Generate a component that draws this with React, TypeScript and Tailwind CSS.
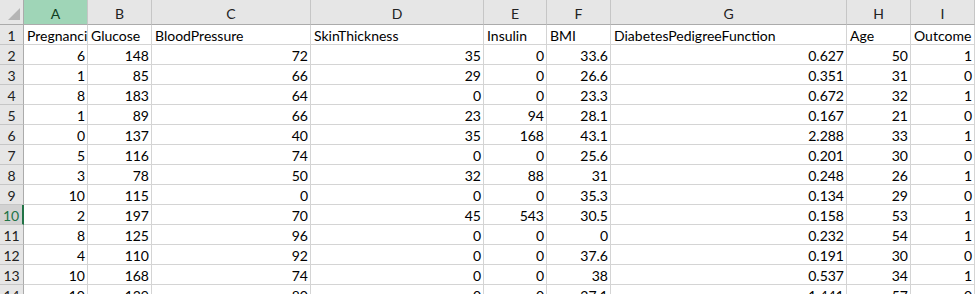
import React from 'react';

const columns = ['A', 'B', 'C', 'D', 'E', 'F', 'G', 'H', 'I'];

const headers = [
  'Pregnancies',
  'Glucose',
  'BloodPressure',
  'SkinThickness',
  'Insulin',
  'BMI',
  'DiabetesPedigreeFunction',
  'Age',
  'Outcome',
];

const rows: string[][] = [
  ['6', '148', '72', '35', '0', '33.6', '0.627', '50', '1'],
  ['1', '85', '66', '29', '0', '26.6', '0.351', '31', '0'],
  ['8', '183', '64', '0', '0', '23.3', '0.672', '32', '1'],
  ['1', '89', '66', '23', '94', '28.1', '0.167', '21', '0'],
  ['0', '137', '40', '35', '168', '43.1', '2.288', '33', '1'],
  ['5', '116', '74', '0', '0', '25.6', '0.201', '30', '0'],
  ['3', '78', '50', '32', '88', '31', '0.248', '26', '1'],
  ['10', '115', '0', '0', '0', '35.3', '0.134', '29', '0'],
  ['2', '197', '70', '45', '543', '30.5', '0.158', '53', '1'],
  ['8', '125', '96', '0', '0', '0', '0.232', '54', '1'],
  ['4', '110', '92', '0', '0', '37.6', '0.191', '30', '0'],
  ['10', '168', '74', '0', '0', '38', '0.537', '34', '1'],
  ['10', '139', '80', '0', '0', '27.1', '1.441', '57', '0'],
];

// row header + A..I, last column runs off the window edge
const gridCols = 'grid grid-cols-[24px_64px_64px_159px_173px_63px_64px_236px_64px_64px]';

const RowHeader = ({ n }: { n: number }) => {
  const selected = n === 10;
  return (
    <div
      className={
        selected
          ? 'h-[20px] flex items-center justify-center pt-[3px] bg-[#d2d2d2] text-[#217346] border-b border-b-[#c6c6c6] border-r-2 border-r-[#217346]'
          : 'h-[20px] flex items-center justify-center pt-[3px] bg-[#e6e6e6] text-[#222] border-b border-b-[#c6c6c6] border-r border-r-[#ababab]'
      }
    >
      {n}
    </div>
  );
};

export default function App() {
  return (
    <div
      className="w-[975px] h-[294px] overflow-hidden bg-white text-[14px] leading-none text-black"
      style={{ fontFamily: 'Lato, "Liberation Sans", sans-serif' }}
    >
      {/* Column letters */}
      <div className={gridCols + ' h-[25px]'}>
        <div className="bg-[#e6e6e6] border-r border-b border-[#ababab] flex items-end justify-end pr-[3px] pb-[4px]">
          <svg width="12" height="12" viewBox="0 0 12 12">
            <polygon points="12,0 12,12 0,12" fill="#b5b5b5" />
          </svg>
        </div>
        {columns.map((c) => (
          <div
            key={c}
            className={
              c === 'A'
                ? 'bg-[#9fd5b7] text-[#0f3d22] border-r border-r-[#c6c6c6] border-b border-b-[#ababab] flex items-center justify-center pt-[4px]'
                : 'bg-[#e6e6e6] text-[#222] border-r border-r-[#c6c6c6] border-b border-b-[#ababab] flex items-center justify-center pt-[4px]'
            }
          >
            {c}
          </div>
        ))}
      </div>

      {/* Row 1: field names */}
      <div className={gridCols + ' h-[20px]'}>
        <RowHeader n={1} />
        {headers.map((h) => (
          <div
            key={h}
            className="border-r border-b border-[#d4d4d4] flex items-center pl-[3px] pt-[3px] overflow-hidden whitespace-nowrap"
          >
            {h}
          </div>
        ))}
      </div>

      {/* Data rows */}
      {rows.map((r, i) => (
        <div key={i} className={gridCols + ' h-[20px]'}>
          <RowHeader n={i + 2} />
          {r.map((v, j) => (
            <div
              key={j}
              className="border-r border-b border-[#d4d4d4] flex items-center justify-end pr-[2px] pt-[3px] overflow-hidden whitespace-nowrap"
            >
              {v}
            </div>
          ))}
        </div>
      ))}
    </div>
  );
}
